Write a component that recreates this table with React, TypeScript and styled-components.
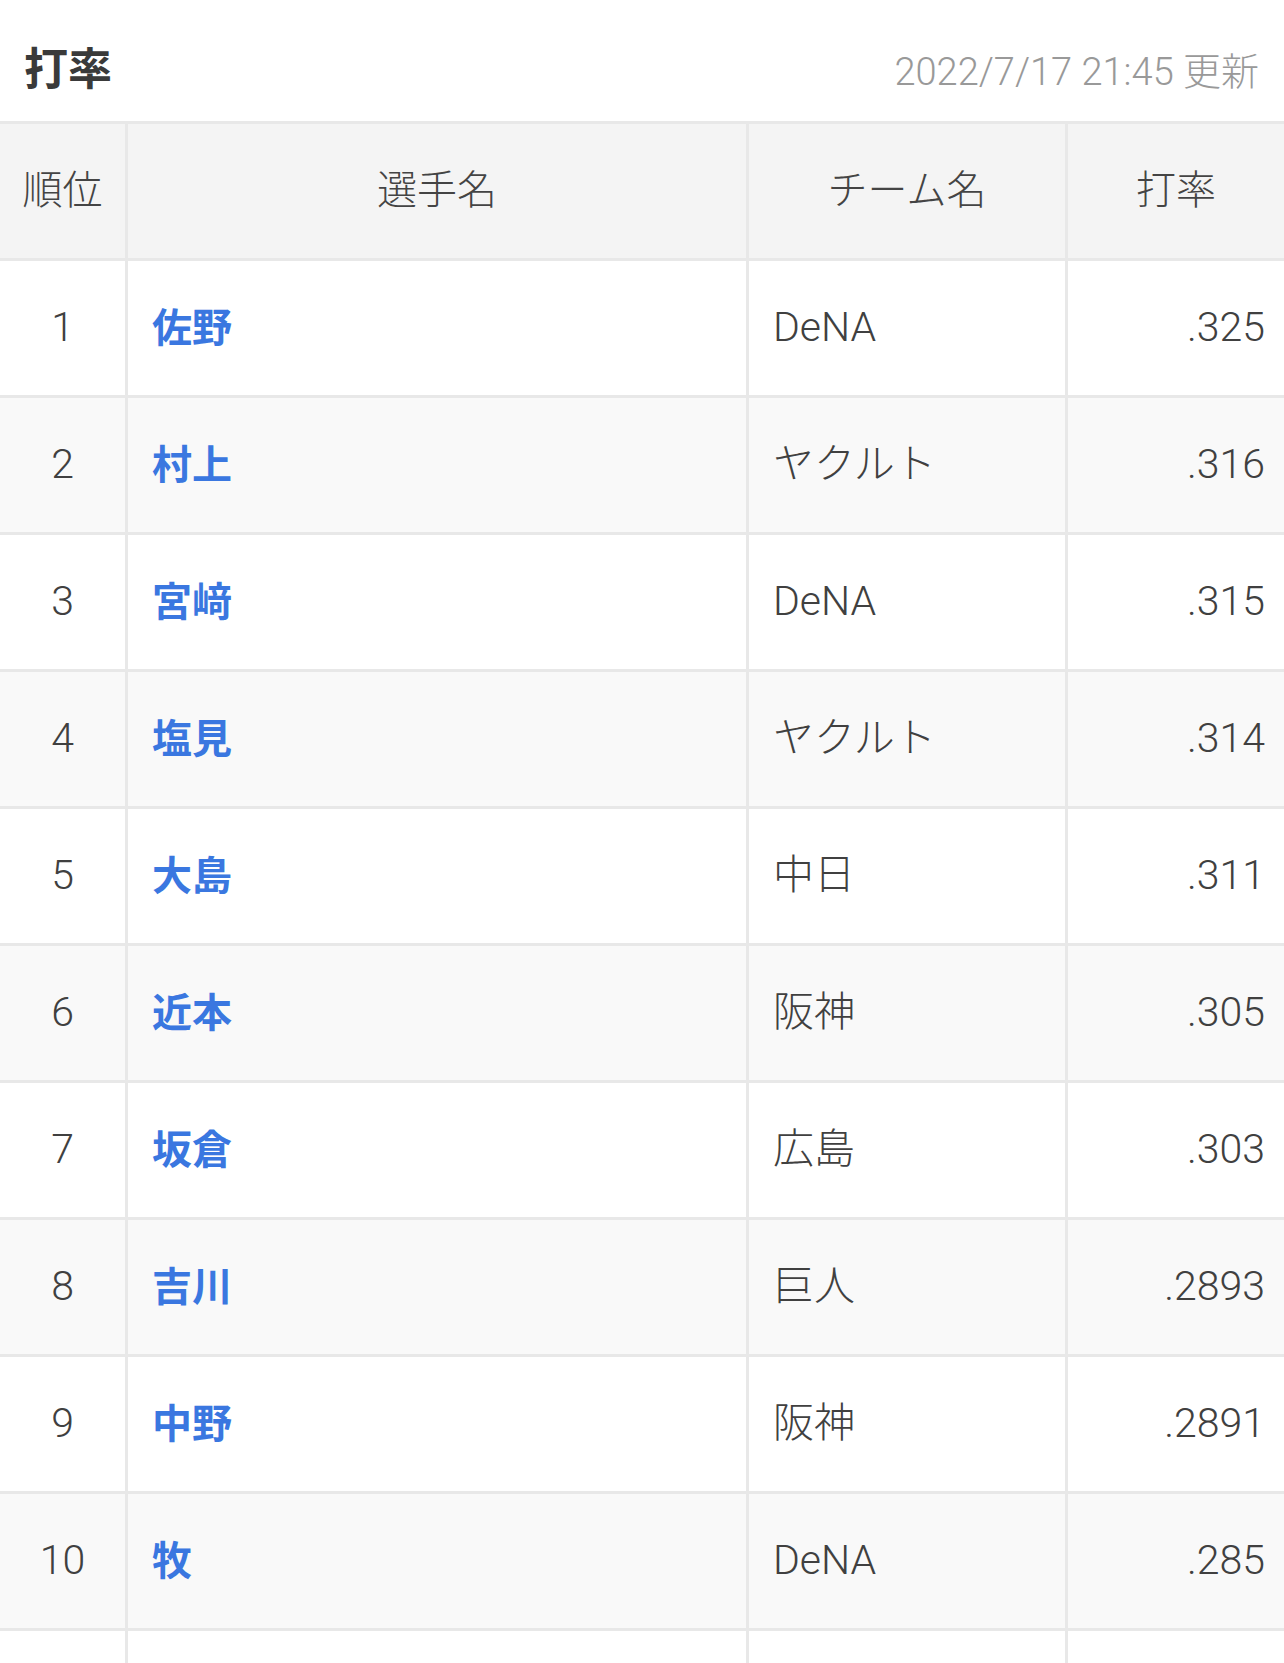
import React from "react";
import styled, { createGlobalStyle } from "styled-components";

const GlobalStyle = createGlobalStyle`
  html, body {
    margin: 0;
    padding: 0;
    background: #ffffff;
  }
  body {
    font-family: "Roboto", "Noto Sans CJK JP", "Noto Sans", sans-serif;
    color: #444444;
  }
  * { box-sizing: border-box; }
`;

const Page = styled.div`
  width: 1284px;
  overflow: hidden;
`;

const TitleBar = styled.div`
  height: 121px;
  padding: 44px 25px 0 24px;
  display: flex;
  justify-content: space-between;
  align-items: baseline;
`;

const Title = styled.h1`
  margin: 0;
  font-family: "Noto Sans CJK JP", sans-serif;
  font-size: 44px;
  line-height: 1;
  font-weight: 700;
  color: #3a3a3a;
`;

const Updated = styled.span`
  font-size: 38px;
  line-height: 1;
  color: #999999;
  font-weight: 300;
`;

const Table = styled.div`
  border-top: 3px solid #e8e8e8;
`;

const Row = styled.div<{ $bg: string }>`
  display: grid;
  grid-template-columns: 128px 621px 319px 1fr;
  height: 137px;
  border-bottom: 3px solid #e8e8e8;
  background: ${(p) => p.$bg};
`;

const Cell = styled.div<{ $align: "left" | "center" | "right"; $last?: boolean; $lift?: number }>`
  display: flex;
  align-items: center;
  justify-content: ${(p) =>
    p.$align === "left" ? "flex-start" : p.$align === "right" ? "flex-end" : "center"};
  padding-left: ${(p) => (p.$align === "left" ? "24px" : "0")};
  padding-right: ${(p) => (p.$align === "right" ? "19px" : "0")};
  padding-bottom: ${(p) => p.$lift ?? 1}px;
  border-right: ${(p) => (p.$last ? "none" : "3px solid #e8e8e8")};
  font-size: 41px;
  line-height: 1;
  font-weight: 300;
  color: #404040;
  white-space: nowrap;
`;

const HeadCell = styled(Cell)`
  font-size: 40px;
  color: #444444;
`;

const PlayerLink = styled.a`
  font-family: "Noto Sans CJK JP", sans-serif;
  font-size: 40px;
  color: #3a77e0;
  font-weight: 700;
  text-decoration: none;
`;

type Entry = { rank: number; name: string; team: string; avg: string };

const data: Entry[] = [
  { rank: 1, name: "佐野", team: "DeNA", avg: ".325" },
  { rank: 2, name: "村上", team: "ヤクルト", avg: ".316" },
  { rank: 3, name: "宮﨑", team: "DeNA", avg: ".315" },
  { rank: 4, name: "塩見", team: "ヤクルト", avg: ".314" },
  { rank: 5, name: "大島", team: "中日", avg: ".311" },
  { rank: 6, name: "近本", team: "阪神", avg: ".305" },
  { rank: 7, name: "坂倉", team: "広島", avg: ".303" },
  { rank: 8, name: "吉川", team: "巨人", avg: ".2893" },
  { rank: 9, name: "中野", team: "阪神", avg: ".2891" },
  { rank: 10, name: "牧", team: "DeNA", avg: ".285" },
];

export default function App() {
  return (
    <Page>
      <GlobalStyle />
      <TitleBar>
        <Title>打率</Title>
        <Updated>2022/7/17 21:45 更新</Updated>
      </TitleBar>
      <Table>
        <Row $bg="#f4f4f4">
          <HeadCell $align="center">順位</HeadCell>
          <HeadCell $align="center">選手名</HeadCell>
          <HeadCell $align="center">チーム名</HeadCell>
          <HeadCell $align="center" $last>打率</HeadCell>
        </Row>
        {data.map((d, i) => (
          <Row key={d.rank} $bg={i % 2 === 0 ? "#ffffff" : "#f9f9f9"}>
            <Cell $align="center">{d.rank}</Cell>
            <Cell $align="left" $lift={6}>
              <PlayerLink href="#">{d.name}</PlayerLink>
            </Cell>
            <Cell $align="left">{d.team}</Cell>
            <Cell $align="right" $last>{d.avg}</Cell>
          </Row>
        ))}
        <Row $bg="#ffffff">
          <Cell $align="center"></Cell>
          <Cell $align="left"></Cell>
          <Cell $align="left"></Cell>
          <Cell $align="right" $last></Cell>
        </Row>
      </Table>
    </Page>
  );
}
